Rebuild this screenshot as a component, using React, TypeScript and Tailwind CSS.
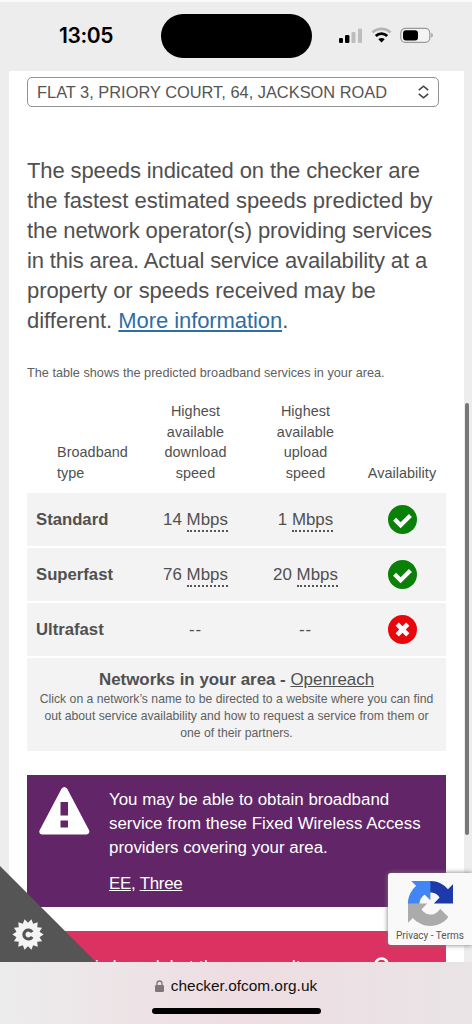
const intro = [
  { text: "The speeds indicated on the checker are", tracking: "tracking-[-0.12px]" },
  { text: "the fastest estimated speeds predicted by", tracking: "tracking-[-0.01px]" },
  { text: "the network operator(s) providing services", tracking: "tracking-[-0.11px]" },
  { text: "in this area. Actual service availability at a", tracking: "tracking-[-0.13px]" },
  { text: "property or speeds received may be", tracking: "tracking-[-0.07px]" },
];

const rows = [
  { type: "Standard", down: "14", up: "1", available: true },
  { type: "Superfast", down: "76", up: "20", available: true },
  { type: "Ultrafast", down: "", up: "", available: false },
];

// 14-point badge outline around (28, 68.5)
const badgePoints = Array.from({ length: 28 }, (_, i) => {
  const radius = i % 2 === 0 ? 15.6 : 11.8;
  const angle = (i * Math.PI) / 14;
  return `${(28 + radius * Math.cos(angle)).toFixed(2)},${(68.5 + radius * Math.sin(angle)).toFixed(2)}`;
}).join(" ");

function StatusBar() {
  return (
    <header className="flex h-[71px] shrink-0 items-start border-t-2 border-[#fafafa] bg-[#ededed]">
      <div className="flex h-[67px] w-[161px] items-center pl-[59px] font-[Inter] text-[21px] font-semibold tracking-[-0.4px] text-black">
        13:05
      </div>
      <div className="mt-3 h-11 w-[151px] rounded-full bg-black" />
      <div className="flex h-[67px] items-center pl-[26px]">
        <svg width="96" height="18" viewBox="0 0 96 18">
          <rect x="1" y="11" width="4" height="5" rx="1.3" fill="#000" />
          <rect x="7" y="8" width="4.4" height="8" rx="1.3" fill="#000" />
          <rect x="13.5" y="5" width="4" height="11" rx="1.3" fill="#bdbdbd" />
          <rect x="20" y="1.5" width="4" height="14.5" rx="1.3" fill="#bdbdbd" />
          <path d="M34.5 5.5a13 13 0 0 1 18 0" fill="none" stroke="#b5b5b5" strokeWidth="2.6" />
          <path d="M37.8 9a8.2 8.2 0 0 1 11.4 0" fill="none" stroke="#000" strokeWidth="2.8" />
          <path d="M40.3 12.2a4.6 4.6 0 0 1 6.4 0L43.5 15.6z" fill="#000" />
          <rect x="62.8" y="1.3" width="29" height="14" rx="4.5" fill="#f4f4f4" stroke="#9b9b9b" strokeWidth="1.2" />
          <rect x="65" y="3.3" width="15" height="10.3" rx="3" fill="#000" />
          <path d="M93.3 6v4.6c2-.6 2-4 0-4.6z" fill="#9b9b9b" />
        </svg>
      </div>
    </header>
  );
}

function Speed({ value }: { value: string }) {
  if (!value) return <span className="tracking-[0.8px]">--</span>;
  return (
    <span>
      {value} <span className="inline-block h-[22px] border-b-2 border-dotted border-[#555] leading-5">Mbps</span>
    </span>
  );
}

function AvailabilityIcon({ available }: { available: boolean }) {
  return (
    <svg width="29" height="29" viewBox="0 0 29 29" fill="none" stroke="#fff">
      <circle cx="14.5" cy="14.5" r="14.5" fill={available ? "#0a8009" : "#e8070c"} stroke="none" />
      {available ? (
        <path d="M6.6 14.2l6 6L22.400 10.400" strokeWidth="4.2" />
      ) : (
        <path d="M9.200 9.200l10.600 10.600M19.800 9.200L9.200 19.800" strokeWidth="4.6" />
      )}
    </svg>
  );
}

function BroadbandTable() {
  return (
    <div className="text-[#505050]">
      <div className="grid h-[82px] grid-cols-[111px_115px_105px_88px] items-end text-center text-[14.4px] leading-[20.4px] tracking-[0.05px]">
        <div className="pl-[30px] text-left">Broadband<br />type</div>
        <div>Highest<br />available<br />download<br />speed</div>
        <div>Highest<br />available<br />upload<br />speed</div>
        <div>Availability</div>
      </div>
      <div className="mt-[10px] flex flex-col gap-[2px]">
        {rows.map((row) => (
          <div
            key={row.type}
            className="grid h-[53px] grid-cols-[111px_115px_105px_88px] items-center bg-[#f3f3f3] text-center text-[16.9px]"
          >
            <div className="pl-[9px] text-left text-[16.7px] font-bold">{row.type}</div>
            <div><Speed value={row.down} /></div>
            <div><Speed value={row.up} /></div>
            <div className="flex justify-center">
              <AvailabilityIcon available={row.available} />
            </div>
          </div>
        ))}
        <div className="h-[93px] bg-[#f3f3f3] pt-[11px] text-center">
          <p className="mb-px text-[16.9px] leading-[21px]">
            <b>Networks in your area - </b>
            <span className="underline">Openreach</span>
          </p>
          <p className="text-[12.2px] leading-[16.8px] whitespace-nowrap text-[#606060]">
            Click on a network’s name to be directed to a website where you can find
            <br />
            out about service availability and how to request a service from them or
            <br />
            one of their partners.
          </p>
        </div>
      </div>
    </div>
  );
}

function CookieCorner() {
  return (
    <svg className="absolute bottom-0 left-0" width="96" height="96" viewBox="0 0 96 96">
      <path d="M0 0l96 96H0z" fill="#555" />
      <polygon points={badgePoints} fill="#f4f4f4" />
      <path d="M32.2 66.1a4.5 4.5 0 1 0 0 4.8" fill="none" stroke="#555" strokeWidth="3.2" />
    </svg>
  );
}

function Recaptcha() {
  return (
    <div className="absolute right-0 bottom-[17px] flex h-[72px] w-[84px] flex-col items-center rounded-l-[3px] bg-[#f9f9f9] pt-2 shadow-[0_0_5px_#777]">
      <svg width="45" height="45" viewBox="0 0 64 64">
        <path
          fill="#1c3aa9"
          d="M64 31.955l-.033-1.37V4.687l-7.16 7.16C50.948 4.674 42.033.093 32.05.093c-10.4 0-19.622 4.96-25.458 12.64l11.736 11.86a15.55 15.55 0 0 1 4.754-5.334c2.05-1.6 4.952-2.906 8.968-2.906.485 0 .86.057 1.135.163 4.976.393 9.288 3.14 11.828 7.124l-8.307 8.307L64 31.953"
        />
        <path
          fill="#4285f4"
          d="M31.862.094l-1.37.033H4.594l7.16 7.16C4.58 13.147 0 22.06 0 32.046c0 10.4 4.96 19.622 12.64 25.458L24.5 45.768a15.55 15.55 0 0 1-5.334-4.754c-1.6-2.05-2.906-4.952-2.906-8.968 0-.485.057-.86.163-1.135.393-4.976 3.14-9.288 7.124-11.828l8.307 8.307L31.86.095"
        />
        <path
          fill="#ababab"
          d="M.001 32.045l.033 1.37v25.898l7.16-7.16c5.86 7.173 14.774 11.754 24.76 11.754 10.4 0 19.622-4.96 25.458-12.64l-11.736-11.86a15.55 15.55 0 0 1-4.754 5.334c-2.05 1.6-4.952 2.906-8.968 2.906-.485 0-.86-.057-1.135-.163-4.976-.393-9.288-3.14-11.828-7.124l8.307-8.307c-10.522.04-22.4.066-27.295-.005"
        />
      </svg>
      <p className="mt-1 font-[Roboto] text-[10px] leading-3 whitespace-nowrap text-[#555]">Privacy - Terms</p>
    </div>
  );
}

export default function App() {
  return (
    <div className="relative flex h-[1024px] w-[472px] flex-col overflow-hidden bg-[#ededed] font-['Liberation_Sans',Arial,sans-serif]">
      <StatusBar />
      <main className="relative h-[891px] shrink-0 overflow-hidden">
        <div className="ml-[9px] h-full w-[455px] bg-white pt-[6px] pl-[18px]">
          <div className="flex h-[30px] w-[412px] items-center justify-between rounded-[5px] border border-[#929292] pr-[9px] pl-[9px] text-[16.4px] whitespace-nowrap text-[#555]">
            <span>FLAT 3, PRIORY COURT, 64, JACKSON ROAD</span>
            <svg width="11" height="14" viewBox="0 0 11 14" fill="none" stroke="#444" strokeWidth="1.6">
              <path d="M.8 5.200l4.700-4 4.700 4M.8 8.800l4.700 4 4.700-4" />
            </svg>
          </div>
          <p className="mt-[49px] text-[22px] leading-[30px] whitespace-nowrap text-[#505050]">
            {intro.map((line) => (
              <span key={line.text} className={line.tracking}>
                {line.text}
                <br />
              </span>
            ))}
            different. <span className="tracking-[-0.08px] text-[#2f6da6] underline">More information</span>.
          </p>
          <p className="mt-[28px] mb-[19px] text-[12.7px] leading-[18px] whitespace-nowrap text-[#606060]">
            The table shows the predicted broadband services in your area.
          </p>
          <div className="w-[419px]">
            <BroadbandTable />
            <section className="mt-6 flex h-[132px] bg-[#622567] text-white">
              <svg className="mt-3 ml-3 shrink-0" width="51" height="48" viewBox="0 0 51 48">
                <path
                  fillRule="evenodd"
                  d="M22.5 1.7Q25.3-1.5 28.2 1.7L50.2 43.5Q51 47 47.7 47.5H3Q-.5 47 .5 43.5zM21.5 15v13.5h7.500V15zM21.5 33.500v7h7.500v-7z"
                  fill="#fff"
                />
              </svg>
              <div className="pt-[13px] pl-[19px] text-[16.9px] leading-6 whitespace-nowrap">
                <p>
                  You may be able to obtain broadband<br />
                  service from these Fixed Wireless Access<br />
                  providers covering your area.
                </p>
                <p className="mt-3 tracking-[-0.25px]">
                  <span className="underline">EE</span>, <span className="underline">Three</span>
                </p>
              </div>
            </section>
            <section className="mt-6 flex h-[60px] bg-[#dc3262] pt-6 pl-[68px] text-[16.9px] leading-6 tracking-[0.25px] whitespace-nowrap text-white">
              <span className="w-[279px]">is based, but the our results</span>
              <svg className="mt-0.5" width="15" height="15" viewBox="0 0 15 15" fill="none" stroke="#fff" strokeWidth="2.6">
                <circle cx="7.5" cy="7.5" r="6" />
              </svg>
            </section>
          </div>
        </div>
        <CookieCorner />
        <Recaptcha />
      </main>
      <div className="absolute top-[403px] left-[465px] h-[432px] w-[4px] rounded-full bg-[#777]" />
      <footer className="flex h-[62px] shrink-0 flex-col items-center bg-linear-to-r from-[#ececec] via-[#eedde2] to-[#e9e4e6]">
        <div className="mt-3 flex h-6 items-center gap-[7px] text-[15.4px] text-[#111]">
          <svg width="9" height="12" viewBox="0 0 9 12">
            <rect y="5" width="9" height="7" rx="1.2" fill="#817579" />
            <path d="M2 5.500V3.500a2.500 2.500 0 0 1 5 0v2" fill="none" stroke="#817579" strokeWidth="1.3" />
          </svg>
          <span>checker.ofcom.org.uk</span>
        </div>
        <div className="mt-[10px] h-[6px] w-[169px] rounded-full bg-black" />
      </footer>
    </div>
  );
}
